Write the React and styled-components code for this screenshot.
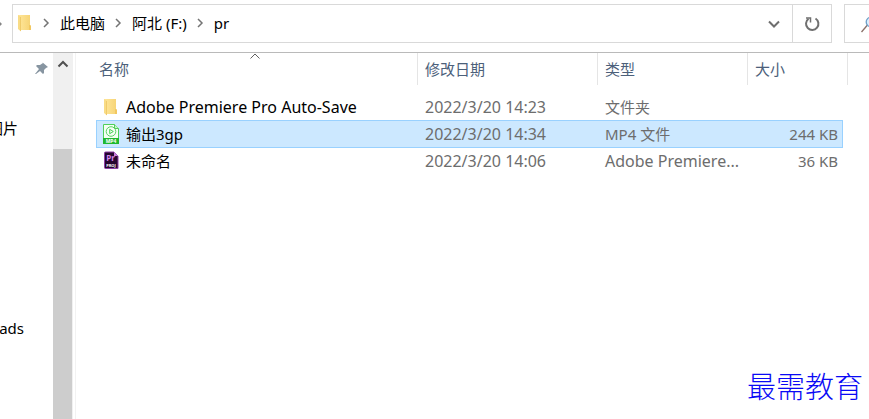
import React from "react";
import styled, { createGlobalStyle } from "styled-components";

const uiFont = `"Noto Sans", "Noto Sans CJK SC", sans-serif`;

const GlobalStyle = createGlobalStyle`
  *, *::before, *::after { box-sizing: border-box; }
  body {
    margin: 0;
    background: #fff;
    color: #000;
    font-family: ${uiFont};
    font-size: 15px;
    line-height: 20px;
  }
  button, input { font: inherit; color: inherit; }
`;

const Window = styled.div`
  position: relative;
  display: flex;
  flex-direction: column;
  height: 100vh;
  overflow: hidden;
`;

const Toolbar = styled.header`
  display: flex;
  flex: none;
  height: 53px;
  padding: 4px 0 9px;
  border-bottom: 1px solid #bababa;
`;

const HistoryButton = styled.button`
  display: flex;
  align-items: center;
  width: 12px;
  padding: 0;
  border: 0;
  background: none;
`;

const AddressBar = styled.nav`
  display: flex;
  flex: 1;
  align-items: stretch;
  min-width: 0;
  margin-right: 12px;
  border: 1px solid #d9d9d9;
`;

const Crumbs = styled.ol`
  display: flex;
  flex: 1;
  align-items: center;
  min-width: 0;
  margin: 0;
  padding: 0 0 2px 4px;
  list-style: none;
`;

const Crumb = styled.li`
  display: flex;
  align-items: center;
  white-space: nowrap;
`;

const CrumbArrow = styled.svg`
  flex: none;
  width: 8px;
  height: 10px;
  margin: 0 10px 0 9px;
`;

const CrumbLink = styled.a`
  color: #000;
  text-decoration: none;
`;

const BarButton = styled.button`
  display: flex;
  align-items: center;
  justify-content: center;
  width: ${(p) => p.$width}px;
  padding: 0;
  border: 0;
  border-left: 1px solid ${(p) => (p.$divided ? "#d9d9d9" : "transparent")};
  background: none;
`;

const SearchBox = styled.label`
  display: flex;
  flex: none;
  align-items: center;
  width: 25px;
  overflow: hidden;
  padding-left: 15px;
  border: 1px solid #d9d9d9;
  border-right: 0;
`;

const SearchIcon = styled.svg`
  flex: none;
`;

const SearchInput = styled.input`
  width: 0;
  padding: 0;
  border: 0;
  outline: 0;
`;

const Body = styled.div`
  display: flex;
  flex: 1;
  min-height: 0;
`;

const Sidebar = styled.aside`
  display: flex;
  flex: none;
  flex-direction: column;
  width: 53px;
  overflow: hidden;
`;

const PinRow = styled.div`
  display: flex;
  flex: none;
  justify-content: flex-end;
  height: 65px;
  padding: 8px 4px 0 0;
`;

const SideLinks = styled.nav`
  display: flex;
  flex-direction: column;
  gap: 180px;
`;

const SideLink = styled.a`
  display: flex;
  justify-content: flex-end;
  padding-right: ${(p) => p.$inset}px;
  color: #000;
  white-space: nowrap;
  text-decoration: none;
`;

const ScrollTrack = styled.div`
  display: flex;
  flex: none;
  flex-direction: column;
  width: 20px;
  background: #f0f0f0;
`;

const ScrollButton = styled.button`
  display: flex;
  flex: none;
  justify-content: center;
  height: 96px;
  padding: 7px 0 0;
  border: 0;
  background: none;
`;

const ScrollThumb = styled.div`
  flex: 1;
  margin-right: 1px;
  background: #cdcdcd;
`;

const Main = styled.main`
  flex: 1;
  min-width: 0;
  margin-left: 2px;
  padding: 0 21px 0 20px;
  border-left: 1px solid #f2f2f2;
`;

const FileTable = styled.table`
  display: block;
`;

const TableHead = styled.thead`
  display: block;
`;

const TableBody = styled.tbody`
  display: block;
  padding: 8px 5px 0 0;
`;

const HeadRow = styled.tr`
  display: grid;
  grid-template-columns: minmax(160px, 1fr) 180px 150px 100px;
`;

const HeadCell = styled.th`
  position: relative;
  height: 32px;
  padding: 6px 0 0 ${(p) => p.$inset || 7}px;
  border-right: 1px solid #e5e5e5;
  color: #4c607a;
  font-weight: 400;
  text-align: left;
`;

const SortMark = styled.svg`
  position: absolute;
  top: 0;
  left: calc(50% - 7px);
`;

const FileRow = styled.tr`
  display: grid;
  grid-template-columns: minmax(160px, 1fr) 180px 150px 95px;
  height: 28px;
  margin-bottom: -1px;
  background: ${(p) => (p.$selected ? "#cce8ff" : "transparent")};
  box-shadow: ${(p) => (p.$selected ? "inset 0 0 0 1px #99d1ff" : "none")};
`;

const Cell = styled.td`
  overflow: hidden;
  padding: 4px ${(p) => (p.$right ? 5 : 8)}px 4px 7px;
  color: #6d6d6d;
  font-size: ${(p) => (p.$latin ? 16 : 15)}px;
  text-align: ${(p) => (p.$right ? "right" : "left")};
  text-overflow: ellipsis;
  white-space: nowrap;
`;

const NameCell = styled(Cell)`
  display: flex;
  gap: 7px;
  color: #000;
`;

const FileIcon = styled.svg`
  flex: none;
  width: 16px;
  height: 20px;
`;

const Watermark = styled.div`
  position: absolute;
  right: 6px;
  bottom: 14px;
  color: #0a0af5;
  font-family: KaiTi, "Noto Sans CJK SC", sans-serif;
  font-size: 29px;
  font-weight: 300;
  line-height: 40px;
`;

function Folder() {
  return (
    <FileIcon viewBox="0 0 16 20" aria-hidden="true">
      <defs>
        <linearGradient id="folderFace" x1="0" x2="1" y1="0" y2="0">
          <stop offset="0" stopColor="#ffe79b" />
          <stop offset="1" stopColor="#f6d374" />
        </linearGradient>
      </defs>
      <path d="M1 2h12v10l1 1v4H4z" fill="url(#folderFace)" />
      <path d="M12 12h1l1 1v4h-2z" fill="#f2c860" />
      <path d="M1 2l3 2v14.500L1 16z" fill="#f9dc86" />
      <path d="M3.500 4v14" stroke="#eec765" strokeWidth=".8" />
    </FileIcon>
  );
}

function VideoFile() {
  return (
    <FileIcon viewBox="0 0 16 20" aria-hidden="true">
      <path d="M.5.5h11l4 4v15H.5z" fill="#f5fff4" stroke="#4fd05a" />
      <path d="M11.500.5v4h4" fill="#c9f3cb" stroke="#4fd05a" />
      <circle cx="8" cy="7.500" r="4.800" fill="none" stroke="#5bd266" />
      <path d="M6.700 5.300l3.600 2.200-3.600 2.200z" fill="none" stroke="#36c944" strokeWidth=".9" />
      <path d="M0 14h16v6H0z" fill="#20b92f" />
      <text x="8" y="19" textAnchor="middle" fontSize="5" fontWeight="700" fill="#fff">MP4</text>
    </FileIcon>
  );
}

function PremiereFile() {
  return (
    <FileIcon viewBox="0 0 16 20" aria-hidden="true">
      <path d="M2.500 1h8.500l4 4v12.500H2.500q-1 0-1-1V2q0-1 1-1z" fill="#26062e" stroke="#8d3fa6" />
      <path d="M11 1v4h4z" fill="#c77fdb" />
      <text x="7.500" y="10" textAnchor="middle" fontSize="8" fontWeight="700" fill="#d887ee">Pr</text>
      <text x="8" y="16" textAnchor="middle" fontSize="4" fontWeight="700" fill="#fff">PROJ</text>
    </FileIcon>
  );
}

const icons = { folder: Folder, video: VideoFile, premiere: PremiereFile };

const files = [
  { icon: "folder", name: "Adobe Premiere Pro Auto-Save", date: "2022/3/20 14:23", type: "文件夹", size: "" },
  { icon: "video", name: "输出3gp", date: "2022/3/20 14:34", type: "MP4 文件", size: "244 KB", selected: true },
  { icon: "premiere", name: "未命名", date: "2022/3/20 14:06", type: "Adobe Premiere...", size: "36 KB" },
];

const path = ["此电脑", "阿北 (F:)", "pr"];

const isLatin = (text) => /^[\x20-\x7e]+$/.test(text);

export default function App() {
  return (
    <Window>
      <GlobalStyle />
      <Toolbar>
        <HistoryButton aria-label="上移">
          <svg width="3" height="6" viewBox="0 0 3 6"><path d="M0 1l2 2-2 2" fill="#858585" /></svg>
        </HistoryButton>
        <AddressBar aria-label="地址">
          <Crumbs>
            <Folder />
            {path.map((part) => (
              <Crumb key={part}>
                <CrumbArrow viewBox="0 0 8 10" aria-hidden="true">
                  <path d="M2 1l4 4-4 4" fill="none" stroke="#747474" strokeWidth="1.500" />
                </CrumbArrow>
                <CrumbLink href="#">{part}</CrumbLink>
              </Crumb>
            ))}
          </Crumbs>
          <BarButton $width={38} aria-label="历史记录">
            <svg width="12" height="8" viewBox="0 0 12 8"><path d="M1 1.500l5 5 5-5" fill="none" stroke="#6e6e6e" strokeWidth="2" /></svg>
          </BarButton>
          <BarButton $width={39} $divided aria-label="刷新">
            <svg width="16" height="16" viewBox="0 0 16 16">
              <path d="M11.500 2.500a6.200 6.200 0 1 1-7 .3" fill="none" stroke="#707070" strokeWidth="2" />
              <path d="M2 2h4.500v4.500" fill="none" stroke="#707070" strokeWidth="1.500" />
            </svg>
          </BarButton>
        </AddressBar>
        <SearchBox>
          <SearchIcon width="18" height="18" viewBox="0 0 18 18" aria-hidden="true">
            <path d="M1.500 17l6-7" stroke="#8a7069" strokeWidth="1.300" />
            <circle cx="11" cy="7" r="4.800" fill="#d9efff" stroke="#6f9fc8" strokeWidth="1.300" />
          </SearchIcon>
          <SearchInput aria-label="搜索" />
        </SearchBox>
      </Toolbar>

      <Body>
        <Sidebar>
          <PinRow>
            <svg width="15" height="15" viewBox="0 0 15 15" aria-hidden="true">
              <path d="M8 1l6 5-2 1-2 2v3l-1 1-3-3-4 3-1 0 4-5-3-3 1-1 3 0 3-2z" fill="#8795a1" />
            </svg>
          </PinRow>
          <SideLinks aria-label="导航窗格">
            <SideLink href="#" $inset={35}>图片</SideLink>
            <SideLink href="#" $inset={29}>ads</SideLink>
          </SideLinks>
        </Sidebar>
        <ScrollTrack>
          <ScrollButton aria-label="向上滚动">
            <svg width="12" height="8" viewBox="0 0 12 8"><path d="M1.500 6.500L6 2l4.500 4.500" fill="none" stroke="#505050" strokeWidth="2" /></svg>
          </ScrollButton>
          <ScrollThumb />
        </ScrollTrack>
        <Main>
          <FileTable>
            <TableHead>
              <HeadRow>
                <HeadCell $inset={3}>
                  名称
                  <SortMark width="10" height="6" viewBox="0 0 10 6" aria-hidden="true">
                    <path d="M.5 5.500L5 1l4.500 4.500" fill="none" stroke="#606060" />
                  </SortMark>
                </HeadCell>
                <HeadCell>修改日期</HeadCell>
                <HeadCell>类型</HeadCell>
                <HeadCell>大小</HeadCell>
              </HeadRow>
            </TableHead>
            <TableBody>
              {files.map((file) => {
                const Icon = icons[file.icon];
                return (
                  <FileRow key={file.name} $selected={file.selected}>
                    <NameCell $latin={isLatin(file.name)}><Icon />{file.name}</NameCell>
                    <Cell $latin>{file.date}</Cell>
                    <Cell $latin={isLatin(file.type)}>{file.type}</Cell>
                    <Cell $right>{file.size}</Cell>
                  </FileRow>
                );
              })}
            </TableBody>
          </FileTable>
        </Main>
      </Body>
      <Watermark>最需教育</Watermark>
    </Window>
  );
}
